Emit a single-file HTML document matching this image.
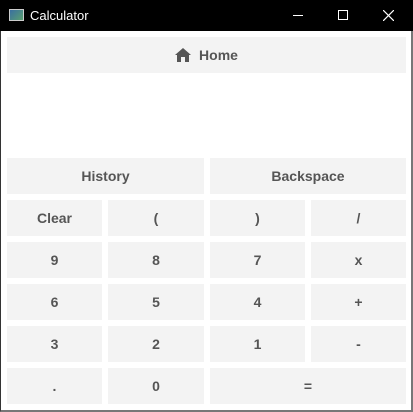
<!DOCTYPE html>
<html><head><style>
*{margin:0;padding:0;box-sizing:border-box}
body{width:413px;height:412px;background:#fff;position:relative;overflow:hidden;font-family:"Liberation Sans",sans-serif}
#tb{position:absolute;left:0;top:0;width:413px;height:31px;background:#000;color:#fff;font-size:13px}
#frame{position:absolute;left:0;top:31px;width:413px;height:381px;border-left:1px solid #333;border-right:2px solid #777;border-bottom:2px solid #777}
.b{position:absolute;background:#f3f3f3;color:#555;font-weight:bold;font-size:14px;display:flex;align-items:center;justify-content:center}
</style></head><body>
<div id="tb">
<div style="position:absolute;left:9px;top:9px;width:15px;height:12px;border:1px solid #ccc;background:linear-gradient(135deg,#3a6fa0,#5aa070)"></div>
<div style="position:absolute;left:30px;top:8px">Calculator</div>
<div style="position:absolute;left:293px;top:15px;width:10px;height:1px;background:#fff"></div>
<div style="position:absolute;left:338px;top:10px;width:10px;height:10px;border:1px solid #fff"></div>
<svg style="position:absolute;left:383px;top:10px" width="11" height="11"><path d="M0 0L11 11M11 0L0 11" stroke="#fff" stroke-width="1.2"/></svg>
</div>
<div id="frame"></div>
<div class="b" style="left:7px;top:37px;width:399px;height:36px"><svg width="16" height="14" viewBox="0 0 16 14" style="margin-right:8px"><path d="M8 0L0 7H2V14H6V9H10V14H14V7H16Z" fill="#555"/></svg>Home</div>
<div class="b" style="left:7px;top:158px;width:197px;height:36px">History</div>
<div class="b" style="left:210px;top:158px;width:196px;height:36px">Backspace</div>

<div class="b" style="left:7px;top:200px;width:95px;height:36px">Clear</div>
<div class="b" style="left:108px;top:200px;width:96px;height:36px">(</div>
<div class="b" style="left:210px;top:200px;width:95px;height:36px">)</div>
<div class="b" style="left:311px;top:200px;width:95px;height:36px">/</div>

<div class="b" style="left:7px;top:242px;width:95px;height:36px">9</div>
<div class="b" style="left:108px;top:242px;width:96px;height:36px">8</div>
<div class="b" style="left:210px;top:242px;width:95px;height:36px">7</div>
<div class="b" style="left:311px;top:242px;width:95px;height:36px">x</div>

<div class="b" style="left:7px;top:284px;width:95px;height:36px">6</div>
<div class="b" style="left:108px;top:284px;width:96px;height:36px">5</div>
<div class="b" style="left:210px;top:284px;width:95px;height:36px">4</div>
<div class="b" style="left:311px;top:284px;width:95px;height:36px">+</div>

<div class="b" style="left:7px;top:326px;width:95px;height:36px">3</div>
<div class="b" style="left:108px;top:326px;width:96px;height:36px">2</div>
<div class="b" style="left:210px;top:326px;width:95px;height:36px">1</div>
<div class="b" style="left:311px;top:326px;width:95px;height:36px">-</div>

<div class="b" style="left:7px;top:368px;width:95px;height:36px">.</div>
<div class="b" style="left:108px;top:368px;width:96px;height:36px">0</div>
<div class="b" style="left:210px;top:368px;width:196px;height:36px">=</div>
</body></html>
